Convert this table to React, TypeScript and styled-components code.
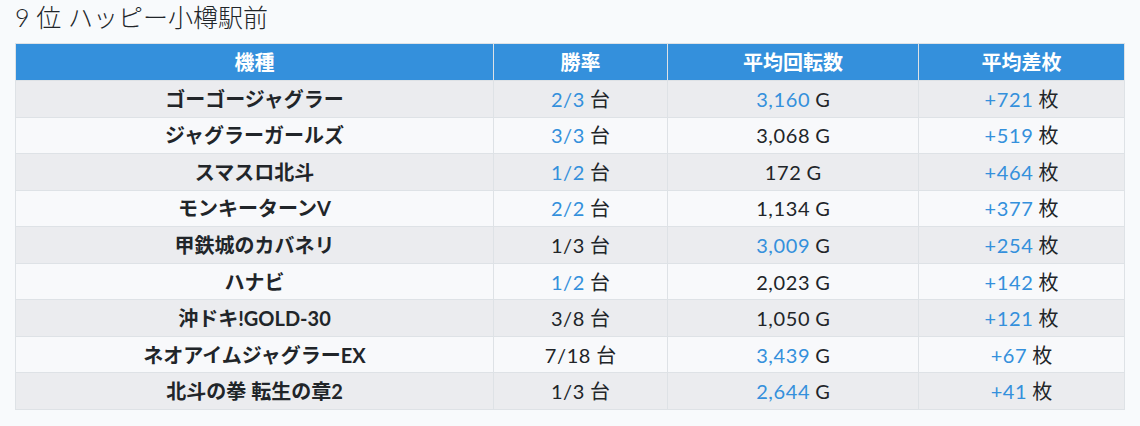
import React from 'react';
import styled, { createGlobalStyle } from 'styled-components';

const BLUE = '#3490dc';
const TEXT = '#212529';
const BORDER = '#dee2e6';

const GlobalStyle = createGlobalStyle`
  body {
    margin: 0;
    background-color: #f8fafc;
    font-family: Lato, "Noto Sans CJK JP", sans-serif;
    color: ${TEXT};
  }
`;

interface Row {
  name: string;
  win: string;
  winHit: boolean;
  spins: string;
  spinsHit: boolean;
  diff: string;
}

const rows: Row[] = [
  { name: 'ゴーゴージャグラー', win: '2/3', winHit: true, spins: '3,160', spinsHit: true, diff: '+721' },
  { name: 'ジャグラーガールズ', win: '3/3', winHit: true, spins: '3,068', spinsHit: false, diff: '+519' },
  { name: 'スマスロ北斗', win: '1/2', winHit: true, spins: '172', spinsHit: false, diff: '+464' },
  { name: 'モンキーターンV', win: '2/2', winHit: true, spins: '1,134', spinsHit: false, diff: '+377' },
  { name: '甲鉄城のカバネリ', win: '1/3', winHit: false, spins: '3,009', spinsHit: true, diff: '+254' },
  { name: 'ハナビ', win: '1/2', winHit: true, spins: '2,023', spinsHit: false, diff: '+142' },
  { name: '沖ドキ!GOLD-30', win: '3/8', winHit: false, spins: '1,050', spinsHit: false, diff: '+121' },
  { name: 'ネオアイムジャグラーEX', win: '7/18', winHit: false, spins: '3,439', spinsHit: true, diff: '+67' },
  { name: '北斗の拳 転生の章2', win: '1/3', winHit: false, spins: '2,644', spinsHit: true, diff: '+41' },
];

const App = () => {
  return (
    <Page>
      <GlobalStyle />
      <Title>9 位 ハッピー小樽駅前</Title>
      <Table>
        <colgroup>
          <col style={{ width: 478 }} />
          <col style={{ width: 174 }} />
          <col style={{ width: 251 }} />
          <col style={{ width: 206 }} />
        </colgroup>
        <thead>
          <tr>
            <Th>機種</Th>
            <Th>勝率</Th>
            <Th>平均回転数</Th>
            <Th>平均差枚</Th>
          </tr>
        </thead>
        <tbody>
          {rows.map((r) => (
            <Tr key={r.name}>
              <NameCell>{r.name}</NameCell>
              <Td>
                <Num hit={r.winHit}>{r.win}</Num> 台
              </Td>
              <Td>
                <Num hit={r.spinsHit}>{r.spins}</Num> G
              </Td>
              <Td>
                <Num hit>{r.diff}</Num> 枚
              </Td>
            </Tr>
          ))}
        </tbody>
      </Table>
    </Page>
  );
};

export default App;

const Page = styled.div`
  padding: 0 15px;
`;

const Title = styled.h2`
  margin: 0;
  font-size: 25px;
  font-weight: 300;
  line-height: 34px;
  height: 43px;
`;

const Table = styled.table`
  width: 1110px;
  border-collapse: collapse;
  table-layout: fixed;
  font-size: 20px;
  line-height: 24px;
`;

const Th = styled.th`
  background-color: ${BLUE};
  color: #fff;
  font-weight: 700;
  height: 36px;
  padding: 0 6px;
  border: 1px solid ${BORDER};
  text-align: center;
  vertical-align: middle;
`;

const Tr = styled.tr`
  background-color: #f8f9fb;
  &:nth-child(odd) {
    background-color: #ebecef;
  }
`;

const Td = styled.td`
  height: 35.55px;
  padding: 0 6px;
  border: 1px solid ${BORDER};
  text-align: center;
  vertical-align: middle;
`;

const NameCell = styled(Td)`
  font-weight: 700;
`;

const Num = styled.span<{ hit?: boolean }>`
  color: ${(p) => (p.hit ? BLUE : TEXT)};
  letter-spacing: 0.6px;
`;
